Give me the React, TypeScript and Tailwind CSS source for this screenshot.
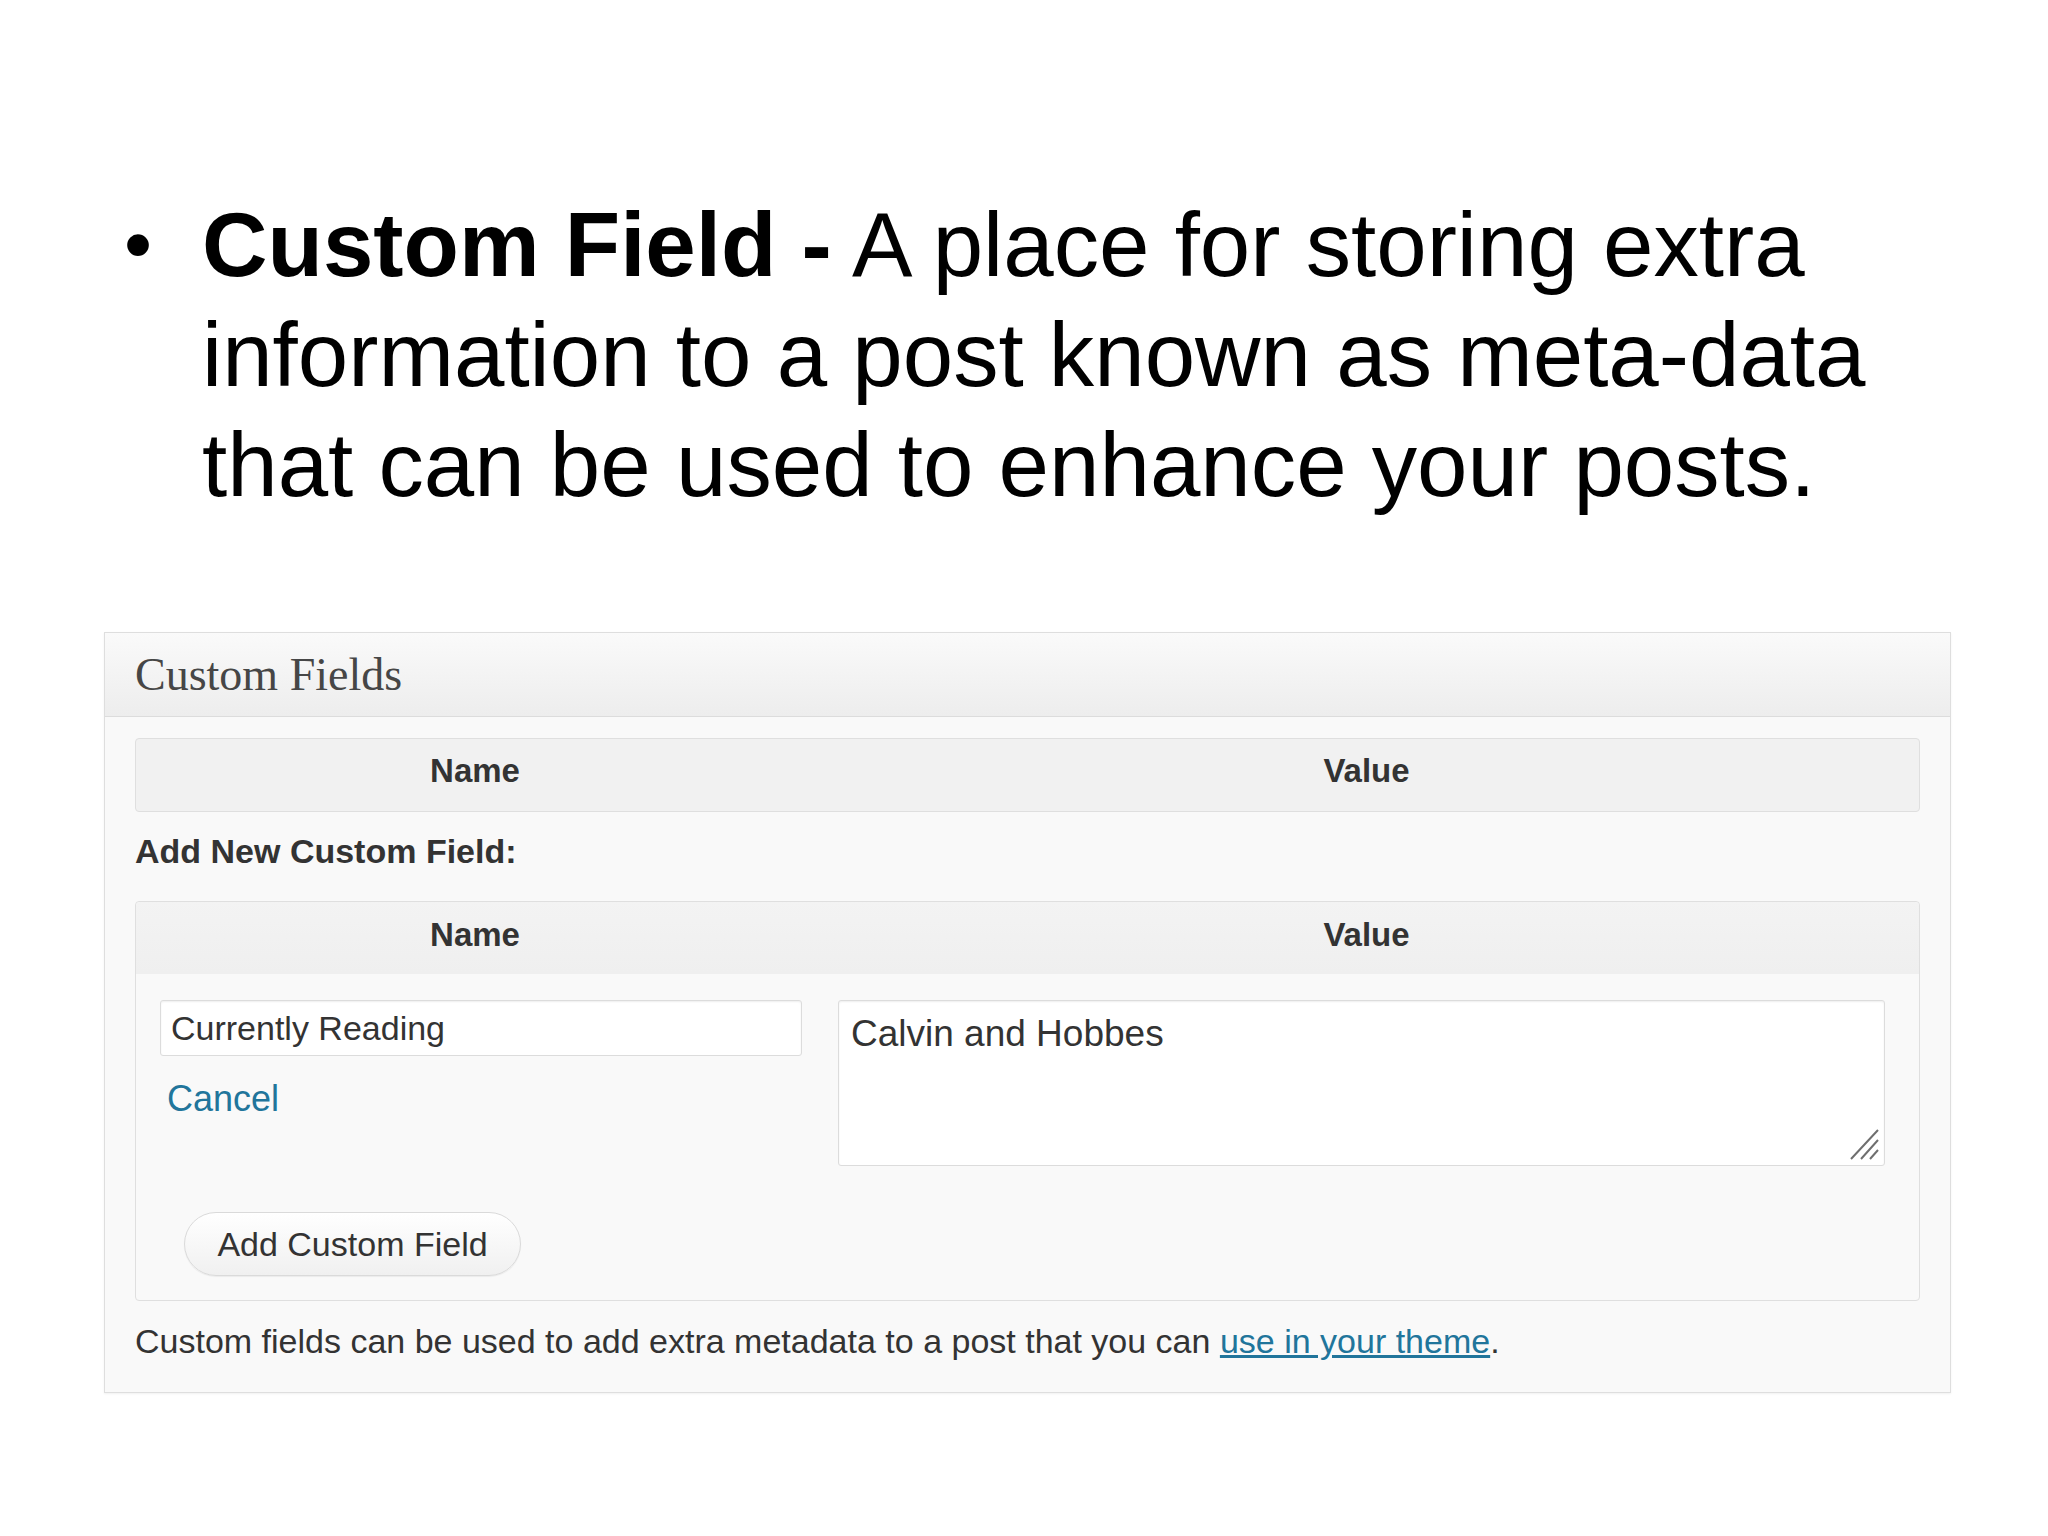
import React from "react";

const sans = { fontFamily: '"Liberation Sans", Arial, sans-serif' };

function ResizeGrip() {
  return (
    <svg width="36" height="36" viewBox="0 0 36 36" className="absolute right-[4px] bottom-[4px]" aria-hidden>
      <path d="M33 4 L6 33 M33 14 L16 33 M33 24 L25 33" stroke="#6f6f6f" strokeWidth="2" fill="none" />
    </svg>
  );
}

export default function App() {
  return (
    <div className="min-h-screen w-[2048px] bg-white text-black" style={sans}>
      <div className="flex pl-[124px] pt-[190px] text-[90.7px] leading-[110px]">
        <span className="w-[78px] shrink-0 text-[80px]">•</span>
        <p className="w-[1740px]">
          <span className="font-bold">Custom Field -</span> A place for storing extra information to a post known as
          meta-data that can be used to enhance your posts.
        </p>
      </div>

      <div className="mx-[104px] mt-[112px] w-[1847px] border border-[#dedede] bg-[#f9f9f9] shadow-[0_1px_2px_rgba(0,0,0,0.06)]">
        <div className="flex h-[84px] items-center border-b border-[#dcdcdc] bg-gradient-to-b from-[#fafafa] to-[#ededed] px-[30px]">
          <h2 className="text-[46px] text-[#464646]" style={{ fontFamily: '"Liberation Serif", Georgia, serif' }}>
            Custom Fields
          </h2>
        </div>

        <div className="px-[30px] pt-[21px] text-[34px] text-[#333]">
          <div className="grid h-[74px] grid-cols-[678px_1fr] items-center rounded-[4px] border border-[#dfdfdf] bg-[#f1f1f1] pb-[8px] text-center text-[33px] font-bold">
            <span>Name</span>
            <span>Value</span>
          </div>

          <div className="h-[89px] pt-[22px] font-bold leading-[34px]">Add New Custom Field:</div>

          <div className="h-[400px] rounded-[4px] border border-[#dfdfdf] bg-[#f9f9f9]">
            <div className="grid h-[72px] grid-cols-[678px_1fr] items-center rounded-t-[4px] bg-gradient-to-b from-[#f3f3f3] to-[#efefef] pb-[6px] text-center text-[33px] font-bold">
              <span>Name</span>
              <span>Value</span>
            </div>
            <div className="grid grid-cols-[678px_1fr] pt-[26px]">
              <div className="pl-[24px] pr-[12px]">
                <input
                  readOnly
                  value="Currently Reading"
                  className="h-[56px] w-full rounded-[3px] border border-[#dcdcdc] bg-white px-[10px] text-[34px] text-[#333] shadow-[inset_0_1px_2px_rgba(0,0,0,0.07)] outline-none"
                  style={sans}
                />
                <a href="#" className="mt-[23px] block pl-[7px] text-[36px] leading-[40px] text-[#21759b]">
                  Cancel
                </a>
              </div>
              <div className="relative ml-[24px] mr-[34px]">
                <textarea
                  readOnly
                  value="Calvin and Hobbes"
                  className="block h-[166px] w-full resize-none rounded-[3px] border border-[#dcdcdc] bg-white px-[12px] pt-[10px] text-[37px] leading-[46px] text-[#333] shadow-[inset_0_1px_2px_rgba(0,0,0,0.07)] outline-none"
                  style={sans}
                />
                <ResizeGrip />
              </div>
            </div>
            <div className="pl-[48px] pt-[46px]">
              <button
                type="button"
                className="h-[64px] w-[337px] rounded-full border border-[#dadada] bg-gradient-to-b from-white to-[#f0f0f0] text-[34px] text-[#333] shadow-[0_1px_1px_rgba(0,0,0,0.06)]"
                style={sans}
              >
                Add Custom Field
              </button>
            </div>
          </div>

          <p className="pt-[23px] pb-[34px] leading-[34px]">
            Custom fields can be used to add extra metadata to a post that you can{" "}
            <a href="#" className="text-[#21759b] underline">
              use in your theme
            </a>
            .
          </p>
        </div>
      </div>
    </div>
  );
}
